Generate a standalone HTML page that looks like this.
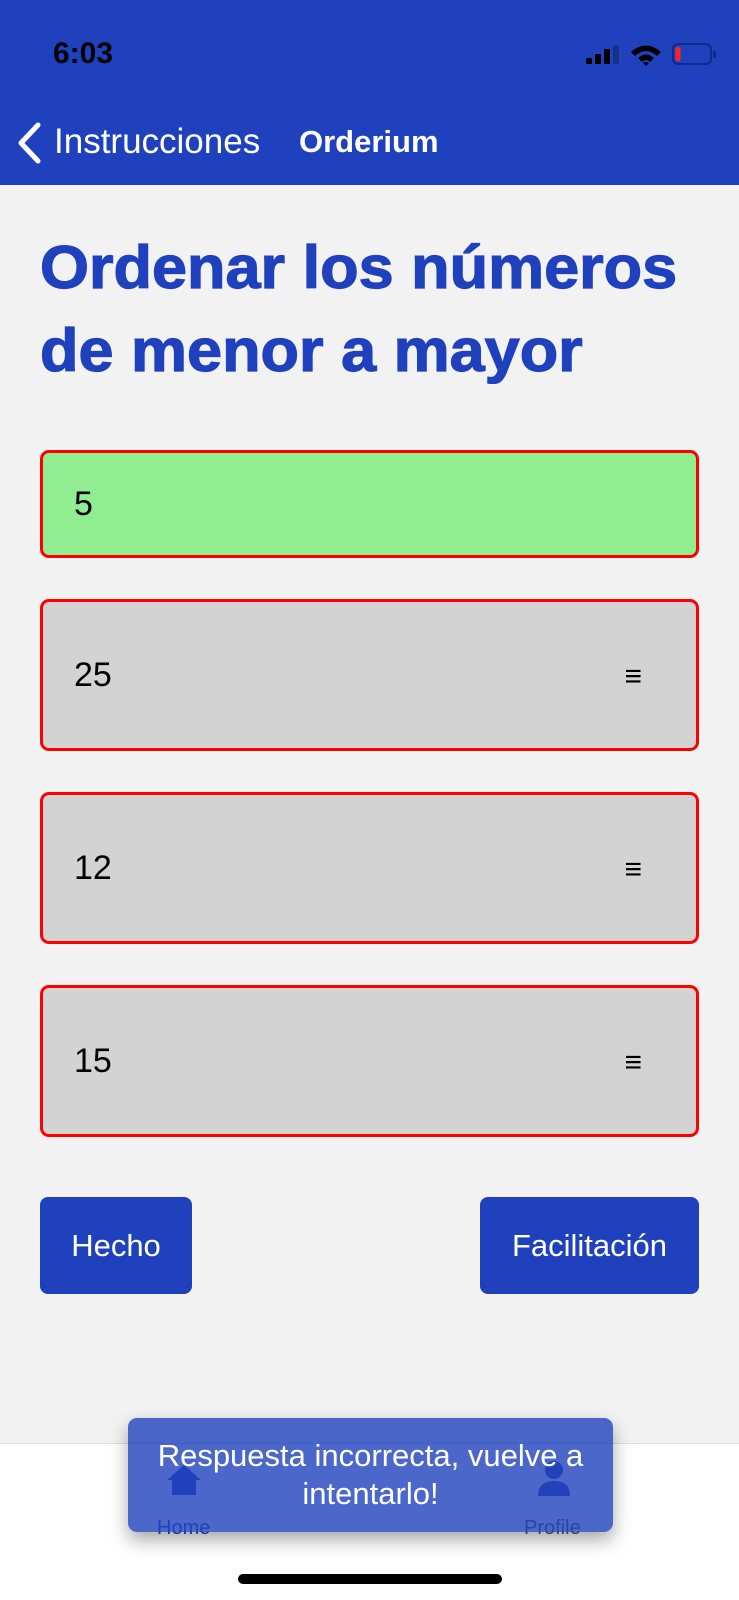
<!DOCTYPE html>
<html><head><meta charset="utf-8">
<style>
*{margin:0;padding:0;box-sizing:border-box}
body{width:739px;height:1600px;background:#f2f2f2;font-family:"Liberation Sans",sans-serif;position:relative;overflow:hidden}
.hdr{position:absolute;left:0;top:0;width:739px;height:185px;background:#1f41bd}
.abs{position:absolute}
.title{left:40px;top:226px;font-size:60px;font-weight:bold;color:#1f41bd;line-height:83px;white-space:nowrap;transform:scaleX(1.05);transform-origin:0 0;-webkit-text-stroke:1.2px #1f41bd}
.box{position:absolute;left:40px;width:659px;border:3px solid #f00;border-radius:9px;background:#d3d3d3}
.box span{position:absolute;left:31px;font-size:34px;color:#000}
.box i{position:absolute;right:54px;font-style:normal;font-size:30px;color:#000}
.btn{position:absolute;top:1197px;height:97px;background:#1f41bd;border-radius:8px;color:#fff;font-size:31px;display:flex;align-items:center;justify-content:center}
</style></head><body>
<div class="hdr"></div>
<div class="abs" style="left:53px;top:37px;font-size:30px;font-weight:bold;color:#000">6:03</div>
<svg class="abs" style="left:586px;top:42px" width="132" height="24" viewBox="586 42 132 24">
<rect x="586" y="58" width="6" height="6" rx="1" fill="#000"/>
<rect x="595" y="54" width="6" height="10" rx="1" fill="#000"/>
<rect x="604" y="49" width="6" height="15" rx="1" fill="#000"/>
<rect x="613" y="45" width="6" height="19" rx="1" fill="#1a2f88"/>
<path d="M631 52 Q646 39 661 52 L657 56 Q646 46 635 56Z M638 58 Q646 51 654 58 L650 62 Q646 58 642 62Z M643 63 L646 66 L649 63 Q646 61 643 63Z" fill="#000"/>
<rect x="673" y="44" width="38" height="20" rx="5" fill="none" stroke="#0d2a8a" stroke-width="2"/>
<rect x="675.5" y="47" width="5" height="14" rx="1.5" fill="#f22"/>
<rect x="713" y="51" width="3" height="7" rx="1" fill="#0d2a8a"/>
</svg>
<svg class="abs" style="left:15px;top:122px" width="28" height="42" viewBox="0 0 28 42"><path d="M23 3 L6 21 L23 39" fill="none" stroke="#fff" stroke-width="5" stroke-linecap="round" stroke-linejoin="round"/></svg>
<div class="abs" style="left:54px;top:122px;font-size:35px;color:#fff">Instrucciones</div>
<div class="abs" style="left:299px;top:124px;font-size:31px;font-weight:bold;color:#fff">Orderium</div>
<div class="abs title">Ordenar los números<br>de menor a mayor</div>
<div class="box" style="top:450px;height:108px;background:#90ee90"><span style="top:32px">5</span></div>
<div class="box" style="top:599px;height:152px"><span style="top:54px">25</span><i style="top:58px">≡</i></div>
<div class="box" style="top:792px;height:152px"><span style="top:54px">12</span><i style="top:58px">≡</i></div>
<div class="box" style="top:985px;height:152px"><span style="top:54px">15</span><i style="top:58px">≡</i></div>
<div class="btn" style="left:40px;width:152px">Hecho</div>
<div class="btn" style="left:480px;width:219px">Facilitación</div>
<div class="abs" style="left:0;top:1443px;width:739px;height:157px;background:#fff;border-top:1px solid #ddd"></div>
<svg class="abs" style="left:166px;top:1464px" width="36" height="32" viewBox="0 0 36 32"><path d="M18 1 L35 16 L30 16 L30 31 L6 31 L6 16 L1 16Z" fill="#1f41bd"/></svg>
<div class="abs" style="left:157px;top:1517px;font-size:20px;color:#1f41bd">Home</div>
<svg class="abs" style="left:536px;top:1460px" width="36" height="38" viewBox="0 0 36 38"><circle cx="18" cy="10" r="9" fill="#2a46b0"/><path d="M2 36 Q2 21 18 21 Q34 21 34 36Z" fill="#2a46b0"/></svg>
<div class="abs" style="left:524px;top:1517px;font-size:20px;color:#555">Profile</div>
<div class="abs" style="left:128px;top:1418px;width:485px;height:114px;background:rgba(31,65,189,0.8);border-radius:9px;box-shadow:0 8px 18px rgba(0,0,0,0.35);color:#fff;font-size:31px;text-align:center;line-height:38px;padding-top:19px;white-space:nowrap">Respuesta incorrecta, vuelve a<br>intentarlo!</div>
<div class="abs" style="left:238px;top:1574px;width:264px;height:10px;border-radius:5px;background:#000"></div>
</body></html>
